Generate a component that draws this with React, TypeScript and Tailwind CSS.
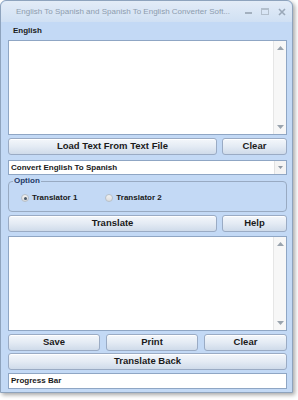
import React from 'react';

const btn =
  'flex items-center justify-center rounded-[3px] border border-[#9aabc4] bg-gradient-to-b from-[#f4f7fb] via-[#e4ebf4] to-[#cfdbea] text-[9.5px] font-bold text-[#1a1a1a] shadow-[inset_0_1px_0_#ffffff]';

function ScrollStrip() {
  return (
    <div className="flex w-[13px] flex-col items-center justify-between border-l border-[#e6e6e6] bg-[#f7f7f7] py-[5px]">
      <svg width="7" height="4" viewBox="0 0 7 4">
        <path d="M0 4 L3.5 0 L7 4 Z" fill="#9aa4ae" />
      </svg>
      <svg width="7" height="4" viewBox="0 0 7 4">
        <path d="M0 0 L3.5 4 L7 0 Z" fill="#9aa4ae" />
      </svg>
    </div>
  );
}

function Radio({ checked, label }: { checked?: boolean; label: string }) {
  return (
    <div className="flex items-center gap-[3px]">
      <span className="flex h-[8px] w-[8px] items-center justify-center rounded-full border border-[#b8c0c8] bg-gradient-to-b from-[#f2f2f2] to-[#dcdcdc]">
        {checked && <span className="h-[3px] w-[3px] rounded-full bg-[#4a5a6a]" />}
      </span>
      <span className="text-[8px] font-bold text-[#1a1a1a]">{label}</span>
    </div>
  );
}

export default function App() {
  return (
    <div
      className="h-[400px] w-[298px] bg-white"
      style={{ fontFamily: '"Liberation Sans", Arial, sans-serif' }}
    >
      <div className="flex h-[393px] w-[293px] flex-col rounded-t-[6px] border border-[#8ea3bd] bg-[#c3d9f5] shadow-[2px_2px_4px_rgba(0,0,0,0.35)]">
        {/* title bar */}
        <div className="flex h-[21px] items-center justify-between rounded-t-[6px] bg-gradient-to-b from-[#e3ecf7] to-[#d0e0f3] pl-[15px] pr-[6px]">
          <span className="whitespace-nowrap text-[8px] text-[#8d9cae]">
            English To Spanish and Spanish To English Converter Soft...
          </span>
          <div className="flex items-center gap-[9px]">
            <svg width="7" height="7" viewBox="0 0 7 7">
              <rect x="0" y="4" width="7" height="2" fill="#a3b0bf" />
            </svg>
            <svg width="8" height="7" viewBox="0 0 8 7">
              <rect x="0.5" y="0.5" width="7" height="6" fill="none" stroke="#b3bfcc" />
              <rect x="0.5" y="0.5" width="7" height="1.5" fill="#b3bfcc" />
            </svg>
            <svg width="8" height="8" viewBox="0 0 8 8">
              <path d="M1 1 L7 7 M7 1 L1 7" stroke="#9aa8b8" strokeWidth="1.6" />
            </svg>
          </div>
        </div>

        <div className="flex flex-1 flex-col pl-[7px] pr-[5px]">
          <div className="mt-[3px] pl-[5px] text-[8px] font-bold leading-[12px] text-[#1a1a1a]">English</div>

          <div className="mt-[3px] flex h-[95px] border border-[#8fa6c4] bg-white">
            <div className="flex-1" />
            <ScrollStrip />
          </div>

          <div className="mt-[3px] flex h-[17px] gap-[5px]">
            <div className={`${btn} flex-1`}>Load Text From Text File</div>
            <div className={`${btn} w-[65px]`}>Clear</div>
          </div>

          <div className="mt-[5px] flex h-[15px] items-center border border-[#8fa6c4] bg-white">
            <span className="flex-1 pl-[2px] text-[8px] font-bold text-[#1a1a1a]">Convert English To Spanish</span>
            <div className="flex h-full w-[12px] items-center justify-center border-l border-[#e2e2e2] bg-[#f4f4f4]">
              <svg width="5" height="3" viewBox="0 0 5 3">
                <path d="M0 0 L2.5 3 L5 0 Z" fill="#8f98a2" />
              </svg>
            </div>
          </div>

          <div className="relative mt-[6px] h-[31px] rounded-[4px] border border-[#98aac2]">
            <span className="absolute left-[4px] top-[-6px] bg-[#c3d9f5] px-[1px] text-[8px] font-bold leading-[10px] text-[#1e3a66]">
              Option
            </span>
            <div className="flex h-full items-center gap-[28px] pl-[12px] pt-[3px]">
              <Radio checked label="Translator 1" />
              <Radio label="Translator 2" />
            </div>
          </div>

          <div className="mt-[3px] flex h-[17px] gap-[5px]">
            <div className={`${btn} flex-1`}>Translate</div>
            <div className={`${btn} w-[65px]`}>Help</div>
          </div>

          <div className="mt-[4px] flex h-[95px] border border-[#8fa6c4] bg-white">
            <div className="flex-1" />
            <ScrollStrip />
          </div>

          <div className="mt-[3px] flex h-[17px] gap-[6px]">
            <div className={`${btn} w-[92px]`}>Save</div>
            <div className={`${btn} w-[92px]`}>Print</div>
            <div className={`${btn} flex-1`}>Clear</div>
          </div>

          <div className={`${btn} mt-[2px] h-[17px]`}>Translate Back</div>

          <div className="mt-[3px] flex h-[16px] items-center border border-[#8fa6c4] bg-white pl-[2px] text-[8px] font-bold text-[#1a1a1a]">
            Progress Bar
          </div>
        </div>
      </div>
    </div>
  );
}
